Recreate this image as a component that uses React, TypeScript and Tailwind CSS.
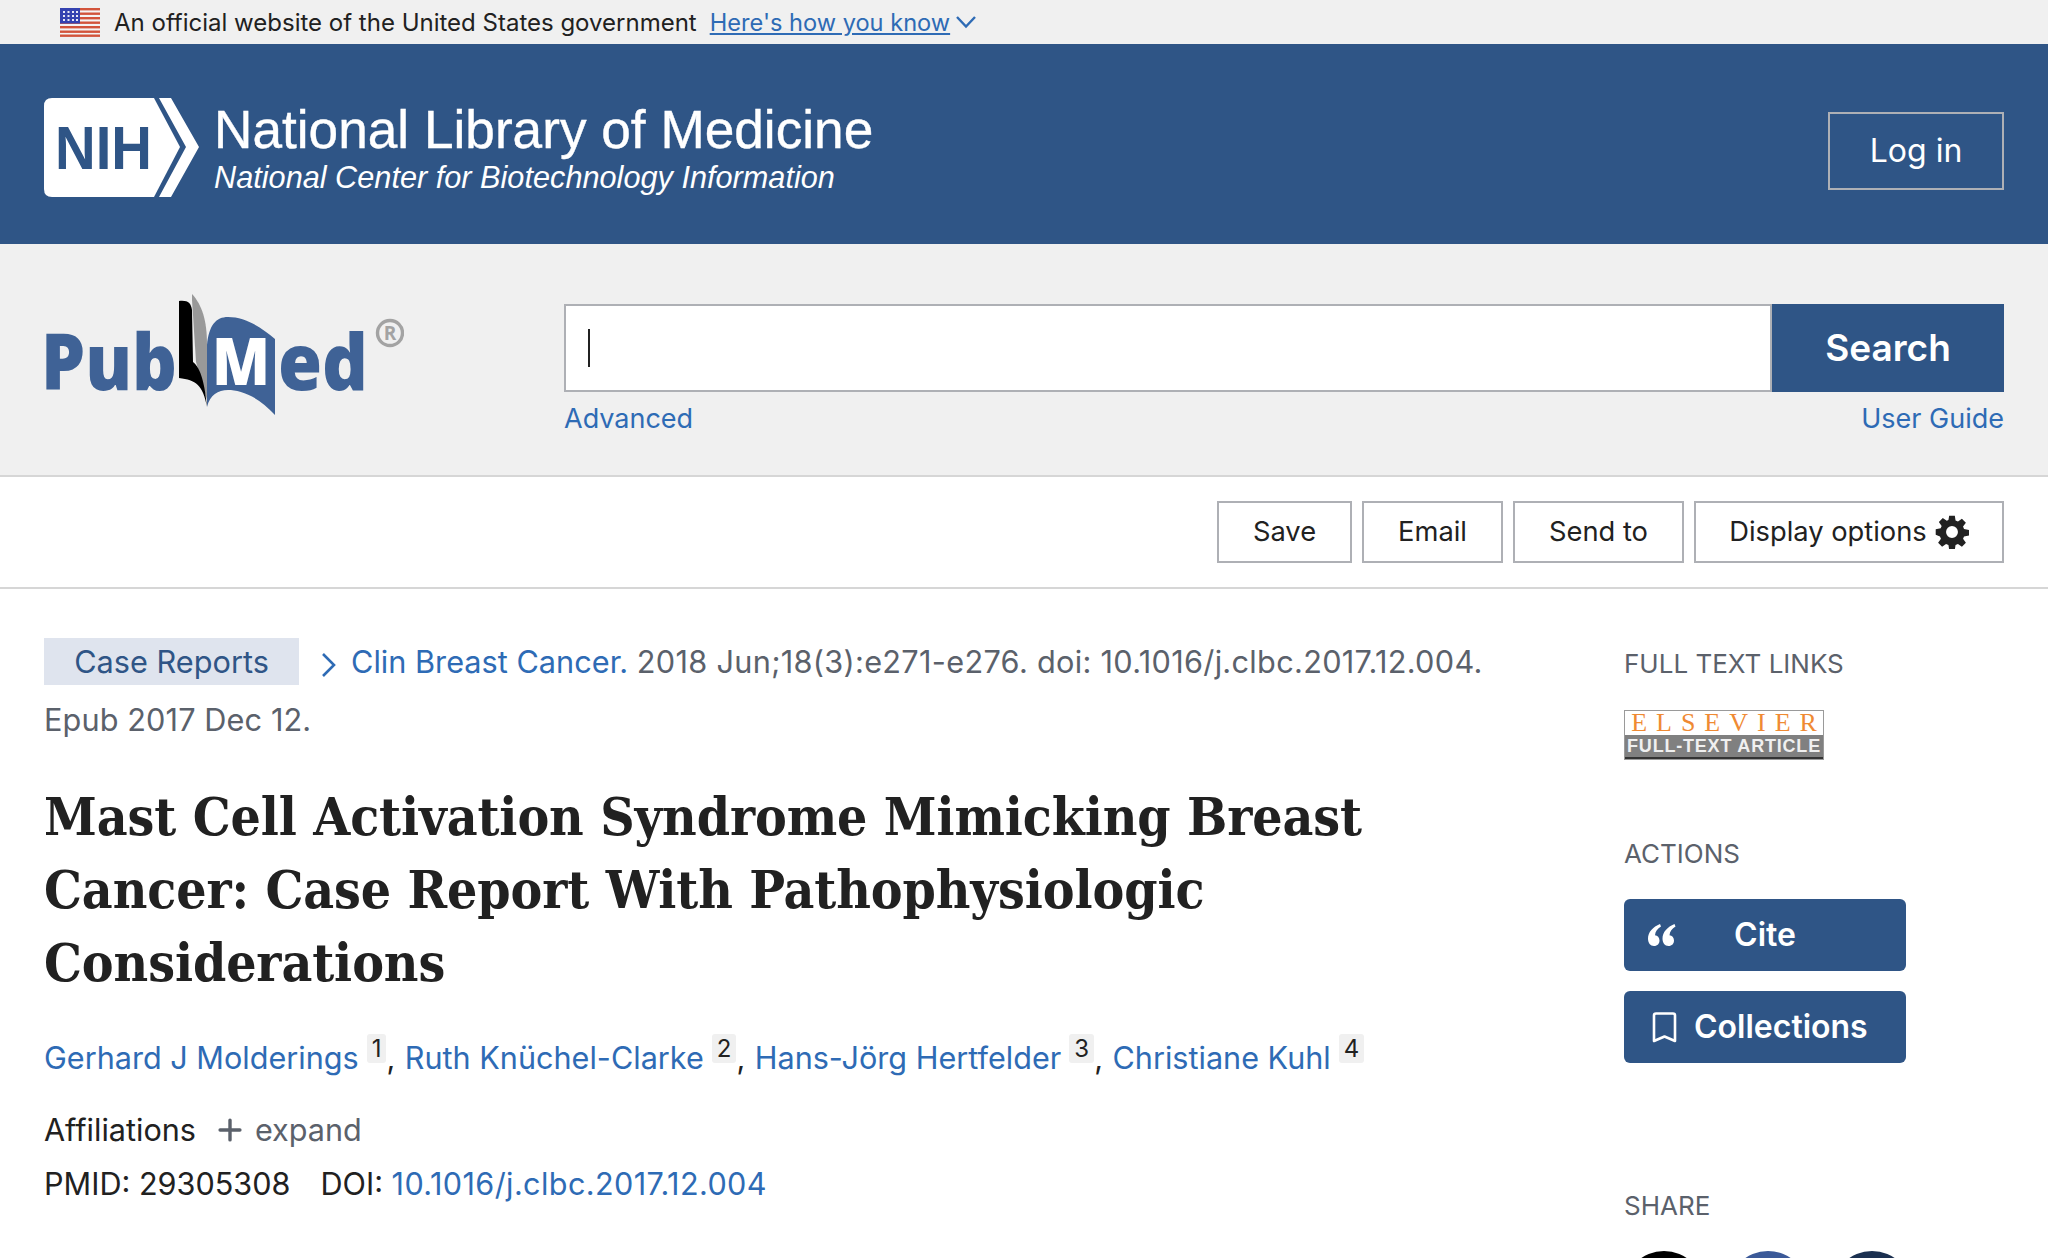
import { Plus } from 'lucide-react'

const authors = [
  { name: 'Gerhard J Molderings', ref: '1' },
  { name: 'Ruth Knüchel-Clarke', ref: '2' },
  { name: 'Hans-Jörg Hertfelder', ref: '3' },
  { name: 'Christiane Kuhl', ref: '4' },
]

function Flag() {
  return (
    <svg width="40" height="29" viewBox="0 0 40 29" className="shrink-0">
      <rect width="40" height="29" fill="#f4f4f4" />
      {[0, 4.5, 9, 13.5, 18, 22.5, 26.5].map((y) => (
        <rect key={y} y={y} width="40" height="2.4" fill="#d2543b" />
      ))}
      <rect width="20" height="15.5" fill="#3542b0" />
      {[3, 7, 11].map((y) =>
        [3, 7.5, 12, 16].map((x) => <rect key={`${x}-${y}`} x={x} y={y} width="2" height="2" fill="#e8e8f5" />),
      )}
    </svg>
  )
}

function NihLogo() {
  return (
    <svg width="156" height="100" viewBox="0 0 156 100" className="shrink-0">
      <path d="M8 0H110L136 49L110 99H8Q0 99 0 91V8Q0 0 8 0Z" fill="#fff" />
      <path d="M115 0H127L155 49L127 99H115L142 49Z" fill="#fff" />
      <text x="11" y="71" fontFamily="Liberation Sans, sans-serif" fontWeight="700" fontSize="61" fill="#2f5586" textLength="97" lengthAdjust="spacingAndGlyphs">
        NIH
      </text>
    </svg>
  )
}

function PubMedLogo() {
  return (
    <svg width="364" height="121" viewBox="40 294 364 121" className="-ml-[4px] shrink-0">
      <text x="41" y="390" fontFamily="Open Sans, sans-serif" fontWeight="800" fontSize="78" fill="#3f6296" textLength="136" lengthAdjust="spacingAndGlyphs">
        Pub
      </text>
      <text x="278" y="390" fontFamily="Open Sans, sans-serif" fontWeight="800" fontSize="78" fill="#3f6296" textLength="90" lengthAdjust="spacingAndGlyphs">
        ed
      </text>
      <path d="M192 294C202 305 207 320 207 345V400L196 362L192 300Z" fill="#999" />
      <path d="M179 301C188 300 191 303 192 310L193 362C201 368 205 385 207 407C203 385 196 380 179 378Z" fill="#000" />
      <path d="M207 345C209 325 216 317 228 317C246 317 262 328 275 339V415C258 396 240 390 228 390C218 390 210 395 207 407Z" fill="#3f6296" />
      <text x="212" y="385" fontFamily="Open Sans, sans-serif" fontWeight="800" fontSize="66" fill="#fff" textLength="58" lengthAdjust="spacingAndGlyphs">
        M
      </text>
      <circle cx="390" cy="333" r="12.5" fill="none" stroke="#a3a3a3" strokeWidth="3.4" />
      <text x="390" y="340" textAnchor="middle" fontFamily="Open Sans, sans-serif" fontWeight="700" fontSize="19" fill="#a3a3a3">
        R
      </text>
    </svg>
  )
}

function Gear() {
  return (
    <svg width="34" height="34" viewBox="0 0 24 24" fill="#212121" className="shrink-0">
      <path
        fillRule="evenodd"
        d="M10 .5h4l.5 3.4 1.7.7L19 2.600l2.800 2.800-2 2.800.7 1.700 3.500.6v4l-3.500.6-.7 1.700 2 2.800-2.800 2.800-2.800-2-1.700.7-.5 3.400h-4l-.5-3.400-1.700-.7-2.800 2-2.800-2.800 2-2.800-.7-1.700L.500 14v-4l3.500-.6.7-1.700-2-2.800L5.500 2.100l2.800 2 1.200-.5L10 .5Zm2 7.300a4.200 4.200 0 1 0 0 8.400 4.200 4.200 0 0 0 0-8.400Z"
      />
    </svg>
  )
}

function ToolButton({ label, width, children }: { label: string; width: string; children?: React.ReactNode }) {
  return (
    <button className={`flex h-[62px] items-center justify-center gap-2 border-2 border-[#aeb0b5] bg-white text-[27.3px] text-[#212121] ${width}`}>
      {label}
      {children}
    </button>
  )
}

function SideTitle({ children, className }: { children: React.ReactNode; className?: string }) {
  return <h3 className={`text-[26px] leading-[32px] text-[#5b616b] ${className ?? ''}`}>{children}</h3>
}

export default function App() {
  return (
    <div className="h-[1258px] overflow-hidden bg-white font-['Inter',sans-serif]">
      <div className="flex h-[44px] items-center gap-[14px] bg-[#f0f0f0] pt-[1px] pl-[60px] text-[24px] text-[#212121]">
        <Flag />
        <span>An official website of the United States government</span>
        <a className="-ml-[1px] flex items-center text-[#2e6bb5]">
          <span className="text-[23.6px] underline underline-offset-2">Here's how you know</span>
          <svg width="22" height="14" viewBox="0 0 22 14" fill="none" stroke="currentColor" strokeWidth="2.4" className="ml-[5px]">
            <path d="M2 2L11 11.500L20 2" />
          </svg>
        </a>
      </div>

      <header className="flex h-[200px] items-center justify-between bg-[#2f5586] px-[44px]">
        <div className="flex items-center gap-[14px] pt-[7px]">
          <NihLogo />
          <div className="font-['Liberation_Sans',sans-serif] text-white">
            <div className="text-[53.2px] leading-[60px] [-webkit-text-stroke:0.4px_white]">National Library of Medicine</div>
            <div className="text-[30.7px] leading-[36px] italic">National Center for Biotechnology Information</div>
          </div>
        </div>
        <button className="mt-[14px] h-[78px] w-[176px] border-2 border-[#aeb0b5] text-[32px] text-white">Log in</button>
      </header>

      <div className="flex h-[233px] border-b-2 border-[#d6d6d6] bg-[#f0f0f0] px-[44px]">
        <div className="w-[520px] pt-[50px]">
          <PubMedLogo />
        </div>
        <div className="flex-1 pt-[60px]">
          <div className="flex h-[88px]">
            <div className="flex flex-1 items-center border-2 border-[#aeb0b5] bg-white pl-[22px]">
              <div className="h-[38px] w-[2px] bg-[#212121]" />
            </div>
            <button className="w-[232px] bg-[#2f5586] text-[37px] font-semibold text-white">Search</button>
          </div>
          <div className="mt-[10px] flex justify-between text-[27px] leading-[34px] text-[#2e6bb5]">
            <a>Advanced</a>
            <a>User Guide</a>
          </div>
        </div>
      </div>

      <div className="flex h-[112px] items-center justify-end gap-[10px] border-b-2 border-[#d6d6d6] px-[44px]">
        <ToolButton label="Save" width="w-[135px]" />
        <ToolButton label="Email" width="w-[141px]" />
        <ToolButton label="Send to" width="w-[171px]" />
        <ToolButton label="Display options" width="w-[310px]">
          <Gear />
        </ToolButton>
      </div>

      <div className="flex pl-[44px]">
        <main className="w-[1580px] pt-[44px]">
          <div className="w-[1450px] text-[30.7px] leading-[58px] text-[#5b616b]">
            <span className="inline-block h-[47px] w-[255px] bg-[#dfe4ee] text-center leading-[47px] text-[#2f5586]">Case Reports</span>
            <svg width="17" height="26" viewBox="0 0 17 26" fill="none" stroke="#2e6bb5" strokeWidth="2.6" className="mr-[14px] ml-[21px] inline-block">
              <path d="M3 2L14 13L3 24" />
            </svg>
            <a className="text-[#2e6bb5]">Clin Breast Cancer.</a> <span className="tracking-[0.3px]">2018 Jun;18(3):e271-e276. doi: 10.1016/j.clbc.2017.12.004.</span>{' '}
            <span className="tracking-[0.1px]">Epub 2017 Dec 12.</span>
          </div>
          <h1 className="mt-[31px] w-[1400px] font-['DejaVu_Serif',serif] text-[53px] leading-[73px] font-bold tracking-[-0.1px] text-[#212121] [font-stretch:condensed]">
            Mast Cell Activation Syndrome Mimicking Breast Cancer: Case Report With Pathophysiologic Considerations
          </h1>
          <div className="mt-[35px] flex items-baseline text-[30.6px] leading-[48px] text-[#2e6bb5]">
            {authors.map((a, i) => (
              <span key={a.ref} className="flex items-baseline">
                <a>{a.name}</a>
                <sup className="relative top-[-12px] ml-[8px] rounded-[3px] bg-[#f0f0f0] px-[5px] text-[24px] leading-[29px] text-[#212121]">{a.ref}</sup>
                {i < authors.length - 1 && <span className="mr-[9.5px] text-[#212121]">,</span>}
              </span>
            ))}
          </div>
          <div className="mt-[24px] flex items-center text-[30.6px] leading-[48px] text-[#212121]">
            Affiliations
            <Plus className="mr-[8px] ml-[17px] h-[34px] w-[34px] text-[#5b616b]" strokeWidth={2.4} />
            <span className="text-[#5b616b]">expand</span>
          </div>
          <div className="mt-[6px] text-[30.6px] leading-[48px] text-[#212121]">
            <span>PMID: 29305308</span>
            <span className="ml-[30px]">DOI: </span>
            <a className="tracking-[0.4px] text-[#2e6bb5]">10.1016/j.clbc.2017.12.004</a>
          </div>
        </main>

        <aside className="w-[424px] pt-[59px]">
          <SideTitle>FULL TEXT LINKS</SideTitle>
          <div className="mt-[30px] flex h-[50px] w-[200px] flex-col border border-[#9a9a9a]">
            <div className="flex h-[24px] items-center justify-center bg-white pl-[9px] font-['Liberation_Serif',serif] text-[26px] leading-none tracking-[9px] text-[#ef8a33]">ELSEVIER</div>
            <div className="flex flex-1 items-center justify-center border-b-2 border-[#333] bg-[#808080] font-['Liberation_Sans',sans-serif] text-[18px] leading-none font-bold tracking-[0.8px] whitespace-nowrap text-[#f0f0f0]">
              FULL-TEXT ARTICLE
            </div>
          </div>
          <SideTitle className="mt-[78px]">ACTIONS</SideTitle>
          <button className="relative mt-[29px] flex h-[72px] w-[282px] items-center justify-center rounded-[6px] bg-[#2f5586] text-[32px] font-semibold text-white">
            <svg width="28" height="22" viewBox="0 0 28 22" fill="#fff" className="absolute top-[25px] left-[24px]">
              <path d="M12 0C5 3 0 8 0 14.500C0 19 2.300 22 6 22C9.500 22 11.500 19.500 11.500 16.500C11.500 13.500 9.500 11.500 7 11.300C7.300 7.500 9.500 4.500 13 2.500Z" />
              <path d="M26.500 0C19.500 3 14.500 8 14.500 14.500C14.500 19 16.800 22 20.500 22C24 22 26 19.500 26 16.500C26 13.500 24 11.500 21.500 11.300C21.800 7.500 24 4.500 27.500 2.500Z" />
            </svg>
            Cite
          </button>
          <button className="mt-[20px] flex h-[72px] w-[282px] items-center gap-[17px] rounded-[6px] bg-[#2f5586] pl-[28px] text-[32px] font-semibold text-white">
            <svg width="25" height="31" viewBox="0 0 25 31" fill="none" stroke="#fff" strokeWidth="2.6" strokeLinejoin="round">
              <path d="M2 3.500Q2 1.500 4 1.500H21Q23 1.500 23 3.500V29L12.500 24.500L2 29Z" />
            </svg>
            Collections
          </button>
          <SideTitle className="mt-[127px]">SHARE</SideTitle>
          <div className="mt-[29px] flex gap-[24px]">
            <div className="h-[80px] w-[80px] rounded-full bg-black" />
            <div className="h-[80px] w-[80px] rounded-full bg-[#3b5998]" />
            <div className="h-[80px] w-[80px] rounded-full bg-[#1b3050]" />
          </div>
        </aside>
      </div>
    </div>
  )
}
